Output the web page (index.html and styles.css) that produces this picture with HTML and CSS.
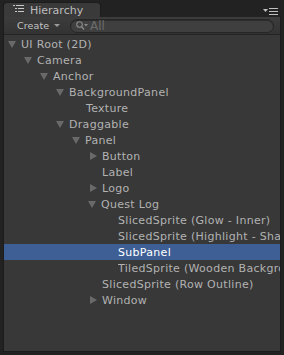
FILE: index.html
```html
<!DOCTYPE html>
<html lang="en">
<head>
   <meta charset="UTF-8">
   <title>Hierarchy</title>
   <link rel="stylesheet" href="styles.css">
</head>
<body>
   <div class="window">
      <div class="tab-strip">
         <div class="tab">
            <svg class="tab-icon" width="11" height="8" viewBox="0 0 11 8">
               <rect x="0" y="0" width="2" height="1" fill="#c8c8c8"/>
               <rect x="3" y="0" width="8" height="1" fill="#c8c8c8"/>
               <rect x="2" y="3" width="2" height="1" fill="#c8c8c8"/>
               <rect x="5" y="3" width="6" height="1" fill="#c8c8c8"/>
               <rect x="2" y="6" width="2" height="1" fill="#c8c8c8"/>
               <rect x="5" y="6" width="6" height="1" fill="#c8c8c8"/>
            </svg>
            <span>Hierarchy</span>
         </div>
         <svg class="tab-menu" width="15" height="8" viewBox="0 0 15 8">
            <polygon points="0,2 5,2 2.5,5" fill="#c0c0c0"/>
            <rect x="6" y="1" width="9" height="1" fill="#c0c0c0"/>
            <rect x="6" y="4" width="9" height="1" fill="#c0c0c0"/>
            <rect x="6" y="7" width="9" height="1" fill="#c0c0c0"/>
         </svg>
      </div>

      <div class="panel">
         <div class="toolbar">
            <div class="create">Create <span class="caret"></span></div>
            <div class="search">
               <svg class="search-icon" width="12" height="10" viewBox="0 0 12 10">
                  <circle cx="3.5" cy="3.5" r="2.8" fill="none" stroke="#8a8a8a" stroke-width="1.1"/>
                  <line x1="5.5" y1="5.5" x2="8" y2="8.5" stroke="#8a8a8a" stroke-width="1.3"/>
                  <polygon points="8,3 12,3 10,5.5" fill="#8a8a8a"/>
               </svg>
               <span class="placeholder">All</span>
            </div>
         </div>

         <div class="tree">
            <div class="row lvl0"><span class="arrow open"></span>UI Root (2D)</div>
            <div class="row lvl1"><span class="arrow open"></span>Camera</div>
            <div class="row lvl2"><span class="arrow open"></span>Anchor</div>
            <div class="row lvl3"><span class="arrow open"></span>BackgroundPanel</div>
            <div class="row lvl4"><span class="arrow none"></span>Texture</div>
            <div class="row lvl3"><span class="arrow open"></span>Draggable</div>
            <div class="row lvl4"><span class="arrow open"></span>Panel</div>
            <div class="row lvl5"><span class="arrow closed"></span>Button</div>
            <div class="row lvl5"><span class="arrow none"></span>Label</div>
            <div class="row lvl5"><span class="arrow closed"></span>Logo</div>
            <div class="row lvl5"><span class="arrow open"></span>Quest Log</div>
            <div class="row lvl6"><span class="arrow none"></span>SlicedSprite (Glow - Inner)</div>
            <div class="row lvl6"><span class="arrow none"></span><span class="label">SlicedSprite (Highlight - Shadow)</span></div>
            <div class="row lvl6 selected"><span class="arrow none"></span>SubPanel</div>
            <div class="row lvl6"><span class="arrow none"></span><span class="label">TiledSprite (Wooden Background)</span></div>
            <div class="row lvl5"><span class="arrow none"></span>SlicedSprite (Row Outline)</div>
            <div class="row lvl5"><span class="arrow closed"></span>Window</div>
         </div>
      </div>
   </div>
</body>
</html>
```

FILE: styles.css
```css
html, body {
   margin: 0;
   height: 100%;
   background: #222222;
   font-family: "DejaVu Sans", Verdana, sans-serif;
   font-size: 11px;
   color: #b2b2b2;
}

.window {
   display: flex;
   flex-direction: column;
   height: 352px;
   padding: 2px 3px 0 3px;
   box-sizing: border-box;
}

.tab-strip {
   display: flex;
   justify-content: space-between;
   align-items: flex-end;
   height: 15px;
}

.tab {
   display: flex;
   align-items: center;
   gap: 6px;
   width: 98px;
   height: 15px;
   box-sizing: border-box;
   padding-left: 9px;
   background: #3a3a3a;
   border: 1px solid #1c1c1c;
   border-bottom: none;
   border-radius: 4px 4px 0 0;
   font-size: 11px;
   color: #bdbdbd;
}

.tab-icon {
   margin-top: -2px;
}

.tab-menu {
   margin: 0 3px 2px 0;
}

.panel {
   flex: 1;
   display: flex;
   flex-direction: column;
   background: #383838;
   border: 1px solid #1c1c1c;
   border-top: none;
   overflow: hidden;
}

.toolbar {
   display: flex;
   align-items: center;
   height: 17px;
   padding: 0 6px 0 0;
   background: linear-gradient(#3c3c3c, #333333);
   border-bottom: 1px solid #232323;
}

.create {
   display: flex;
   align-items: center;
   width: 66px;
   padding-left: 13px;
   box-sizing: border-box;
   font-size: 9.5px;
   letter-spacing: 0.1px;
   color: #c4c4c4;
}

.caret {
   width: 0;
   height: 0;
   margin-left: 5px;
   border-left: 3px solid transparent;
   border-right: 3px solid transparent;
   border-top: 3px solid #9a9a9a;
}

.search {
   flex: 1;
   display: flex;
   align-items: center;
   height: 12px;
   padding-left: 5px;
   background: #3f3f3f;
   border: 1px solid #262626;
   border-radius: 7px;
   box-shadow: inset 0 1px 0 #2c2c2c;
}

.search-icon {
   margin-right: 2px;
}

.placeholder {
   font-size: 12px;
   color: #6c6c6c;
}

.tree {
   padding-top: 1px;
}

.row {
   display: flex;
   align-items: center;
   height: 16px;
   white-space: nowrap;
   letter-spacing: 0.3px;
}

.row .label {
   overflow: hidden;
   flex: 1;
   min-width: 0;
}

.row.selected {
   background: #3e5f96;
   color: #ffffff;
}

.arrow {
   flex: none;
   width: 14px;
   height: 9px;
   margin-left: 4px;
   margin-right: 0;
}

.arrow.open {
   width: 0;
   height: 0;
   margin-right: 5px;
   border-left: 4.5px solid transparent;
   border-right: 4.5px solid transparent;
   border-top: 7px solid #6a6a6a;
}

.arrow.closed {
   width: 0;
   height: 0;
   margin-left: 6px;
   margin-right: 5px;
   border-top: 4.5px solid transparent;
   border-bottom: 4.5px solid transparent;
   border-left: 7px solid #6a6a6a;
}

.lvl0 { padding-left: 0; }
.lvl1 { padding-left: 16px; }
.lvl2 { padding-left: 32px; }
.lvl3 { padding-left: 48px; }
.lvl4 { padding-left: 64px; }
.lvl5 { padding-left: 80px; }
.lvl6 { padding-left: 96px; }
```
